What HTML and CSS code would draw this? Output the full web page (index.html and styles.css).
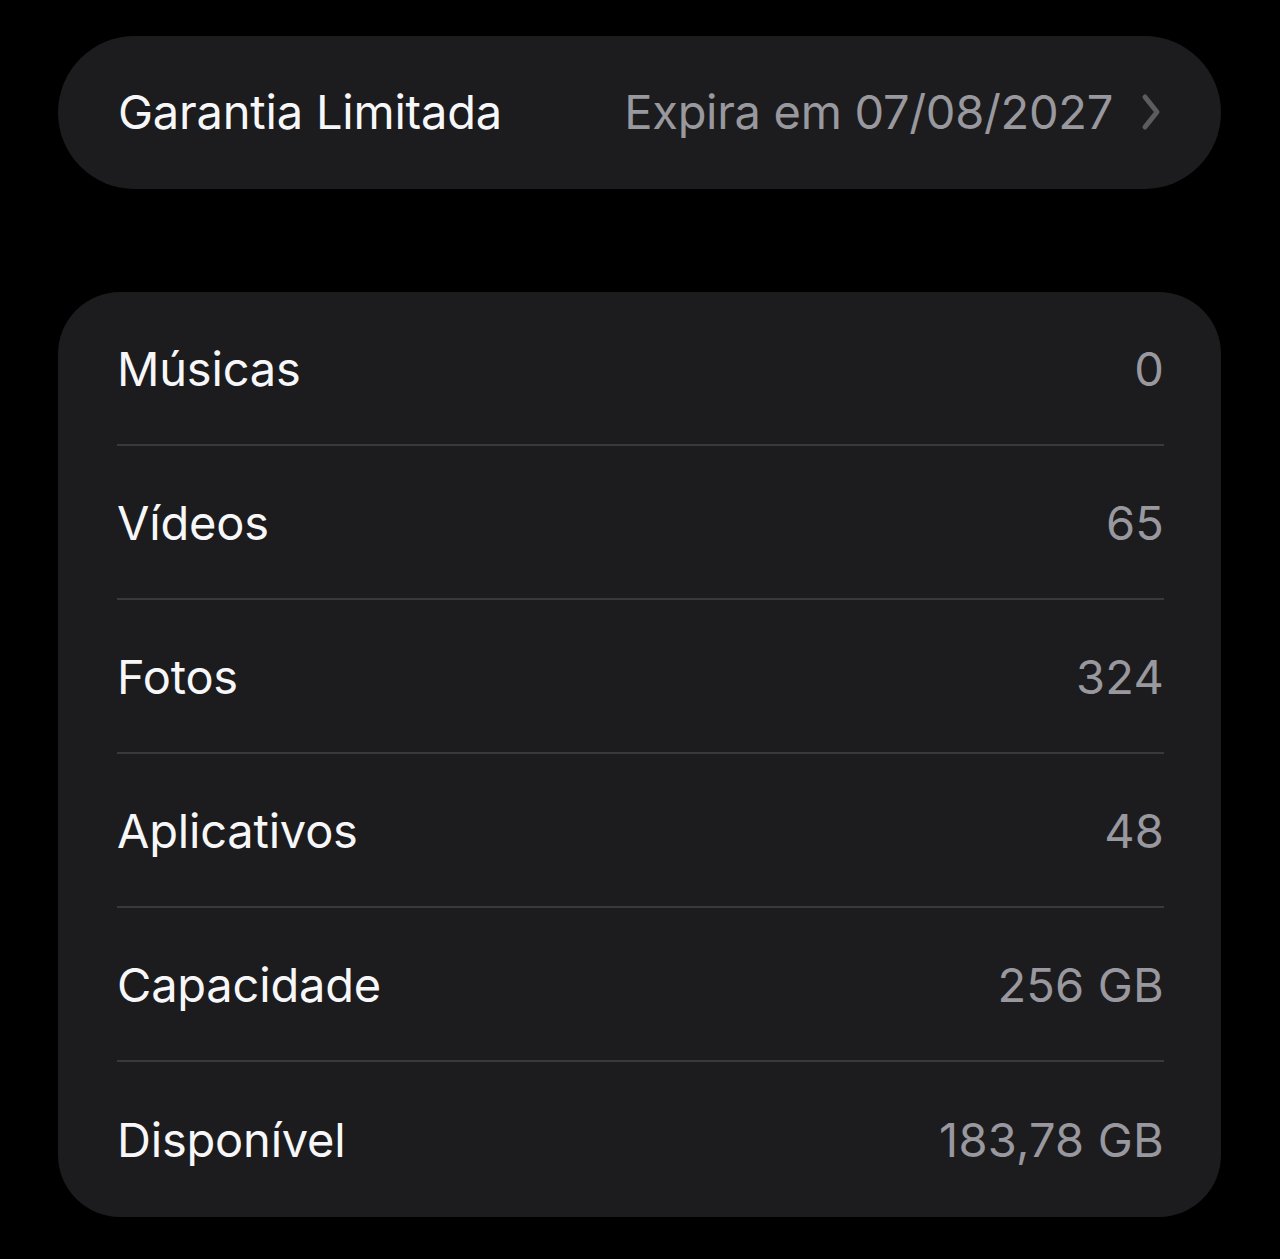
FILE: index.html
```html
<!DOCTYPE html>
<html lang="pt-BR">
<head>
<meta charset="utf-8">
<title>Sobre</title>
<link rel="stylesheet" href="styles.css">
</head>
<body>
<div class="page">
  <div class="card pill">
    <div class="row">
      <span class="label">Garantia Limitada</span>
      <span class="value">Expira em 07/08/2027<svg class="chev" width="22" height="38" viewBox="0 0 22 38"><path d="M5 4 L17 19 L5 34" fill="none" stroke="#5b5b60" stroke-width="5" stroke-linecap="round" stroke-linejoin="round"/></svg></span>
    </div>
  </div>
  <div class="card list">
    <div class="row"><span class="label">Músicas</span><span class="value">0</span></div>
    <div class="row"><span class="label">Vídeos</span><span class="value">65</span></div>
    <div class="row"><span class="label">Fotos</span><span class="value">324</span></div>
    <div class="row"><span class="label">Aplicativos</span><span class="value">48</span></div>
    <div class="row"><span class="label">Capacidade</span><span class="value">256 GB</span></div>
    <div class="row"><span class="label">Disponível</span><span class="value">183,78 GB</span></div>
  </div>
</div>
</body>
</html>
```
FILE: styles.css
```css
html, body {
  margin: 0;
  padding: 0;
  background: #000;
}
body {
  font-family: Inter, "Noto Sans", "DejaVu Sans", sans-serif;
  -webkit-font-smoothing: antialiased;
}
.page {
  padding: 36px 59px 0 58px;
  display: flex;
  flex-direction: column;
  gap: 103px;
}
.card {
  background: #1c1c1e;
}
.pill {
  border-radius: 77px;
  height: 153px;
  padding: 0 59px 0 60px;
  display: flex;
  align-items: center;
}
.pill .row {
  flex: 1;
  border: none;
  height: auto;
  padding-bottom: 2px;
}
.list {
  border-radius: 62px;
  padding: 0 57px 0 59px;
}
.row {
  display: flex;
  justify-content: space-between;
  align-items: center;
  height: 152px;
  border-bottom: 2px solid #39393d;
}
.list .row:last-child {
  border-bottom: none;
  height: 155px;
}
.label {
  color: #f7f7f9;
  font-size: 47px;
  letter-spacing: -0.2px;
}
.value {
  color: #98989e;
  font-size: 47px;
  letter-spacing: 0.2px;
  display: flex;
  align-items: center;
}
.pill .value {
  letter-spacing: -0.3px;
}
.chev {
  margin-left: 27px;
  display: block;
}
```
